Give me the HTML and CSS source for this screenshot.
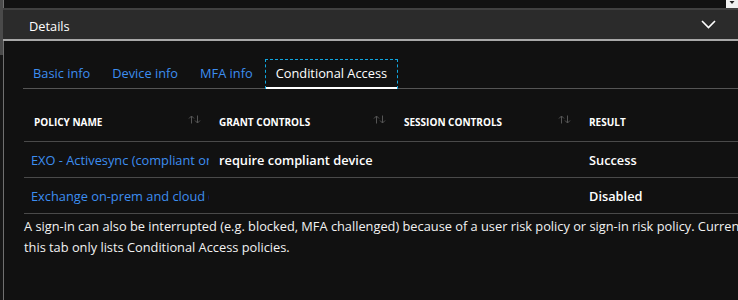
FILE: index.html
```html
<!DOCTYPE html>
<html lang="en">
<head>
    <meta charset="UTF-8">
    <meta name="viewport" content="width=device-width, initial-scale=1.0">
    <title>Sign-in details</title>
    <link rel="stylesheet" href="styles.css">
</head>
<body>
    <div class="page">
        <div class="gutter"><div class="thumb"></div></div>
        <div class="panel">
            <div class="topstrip">
                <div class="scroll-btn">
                    <svg width="12" height="8" viewBox="0 0 12 8"><path d="M3.5 1h5L6 4z" fill="#222"/></svg>
                </div>
            </div>
            <div class="blade-header">
                <span>Details</span>
                <svg class="chevron" width="15" height="9" viewBox="0 0 15 9"><path d="M1 1l6.5 6.5L14 1" fill="none" stroke="#fff" stroke-width="1.6"/></svg>
            </div>
            <div class="content">
                <div class="tabs">
                    <a class="tab">Basic info</a>
                    <a class="tab">Device info</a>
                    <a class="tab">MFA info</a>
                    <a class="tab active">Conditional Access</a>
                </div>

                <div class="grid">
                    <div class="row head">
                        <div class="cell">POLICY NAME <svg class="sort" width="13" height="9" viewBox="0 0 13 9"><path d="M3.5 8.5V1M1 3.5l2.5-2.5 2.5 2.5M9.5 0.5V8M7 5.5l2.5 2.5 2.5-2.5" fill="none" stroke="#555" stroke-width="1"/></svg></div>
                        <div class="cell">GRANT CONTROLS <svg class="sort" width="13" height="9" viewBox="0 0 13 9"><path d="M3.5 8.5V1M1 3.5l2.5-2.5 2.5 2.5M9.5 0.5V8M7 5.5l2.5 2.5 2.5-2.5" fill="none" stroke="#555" stroke-width="1"/></svg></div>
                        <div class="cell">SESSION CONTROLS <svg class="sort" width="13" height="9" viewBox="0 0 13 9"><path d="M3.5 8.5V1M1 3.5l2.5-2.5 2.5 2.5M9.5 0.5V8M7 5.5l2.5 2.5 2.5-2.5" fill="none" stroke="#555" stroke-width="1"/></svg></div>
                        <div class="cell">RESULT</div>
                    </div>
                    <div class="row">
                        <div class="cell"><a class="policy">EXO - Activesync (compliant or approved client app)</a></div>
                        <div class="cell strong">require compliant device</div>
                        <div class="cell"></div>
                        <div class="cell strong">Success</div>
                    </div>
                    <div class="row">
                        <div class="cell"><a class="policy">Exchange on-prem and cloud (MFA)</a></div>
                        <div class="cell"></div>
                        <div class="cell"></div>
                        <div class="cell strong">Disabled</div>
                    </div>
                </div>

                <p class="note">A sign-in can also be interrupted (e.g. blocked, MFA challenged) because of a user risk policy or sign-in risk policy. Currently, this tab only lists Conditional Access policies.</p>
            </div>
        </div>
    </div>
</body>
</html>
```

FILE: styles.css
```css
html, body { margin: 0; height: 100%; background: #111; overflow: hidden; }
body { font-family: "Segoe UI", "Open Sans", sans-serif; font-size: 12.8px; color: #fff; }
.page { display: flex; height: 100%; }
.gutter { width: 3px; flex: none; background: #161616; border-right: 1px solid #707070; }
.thumb { height: 55px; background: #4a4a4a; }
.panel { flex: none; width: 780px; margin-left: -1px; }
.topstrip { height: 8px; display: flex; justify-content: flex-end; padding-right: 45px; }
.scroll-btn { width: 12px; height: 8px; background: #f0f0f0; }
.scroll-btn svg { display: block; }
.blade-header { height: 29px; background: #2b2b2b; border-top: 2px solid #404040; border-bottom: 2px solid #a8a8a8; display: flex; align-items: center; justify-content: space-between; padding: 0 67px 0 26px; }
.blade-header span { position: relative; top: 1px; }
.chevron { display: block; }
.content { padding-left: 21px; }
.tabs { display: flex; gap: 2px; margin-top: 18px; margin-left: -1px; border-bottom: 1px solid #555; height: 29px; }
.tab { padding: 0 10px; line-height: 28px; color: #3d8ef0; box-sizing: border-box; height: 30px; }
.tab.active { color: #fff; border: 1px dashed #11a7e0; border-bottom: none; box-shadow: inset 0 -2px 0 #fff; line-height: 27px; padding: 0 10px; }
.grid { margin-top: 14px; }
.row { display: grid; grid-template-columns: repeat(4, 185px); height: 35px; border-bottom: 1px solid #4a4a4a; align-items: center; }
.row.head { height: 38px; }
.cell { padding-left: 10px; white-space: nowrap; overflow: hidden; display: flex; align-items: center; height: 100%; }
.head .cell { font-size: 10px; font-weight: 700; justify-content: space-between; padding-right: 8px; }
.sort { display: block; margin-top: -6px; }
.policy { color: #3d8ef0; margin-left: -3px; }
.strong { font-weight: 600; }
.note { margin: 0; padding-top: 2px; width: 745px; line-height: 21px; color: #f2f2f2; }
```
